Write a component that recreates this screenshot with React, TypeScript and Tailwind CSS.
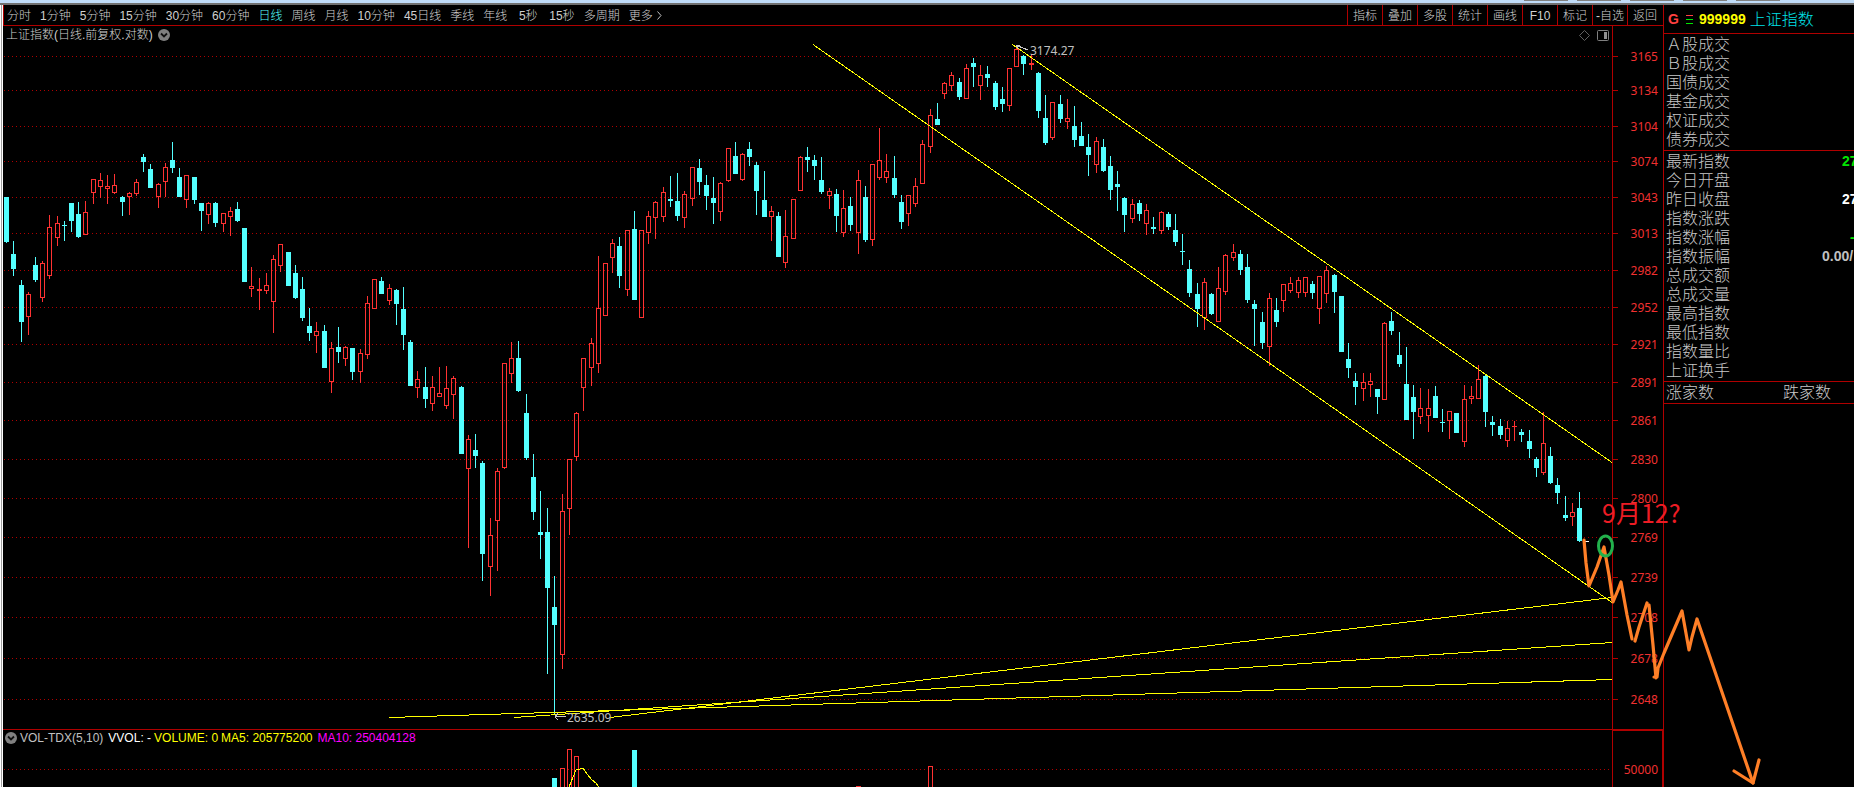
import React from "react";

type Candle = { up: boolean; x: number; high: number; top: number; bottom: number; low: number };

// direction + x, high, body top, body bottom, low
const CANDLE_DATA = `
d6 197 197 242 243;d13 241 254 269 276;d21 280 285 322 342;u28 292 294 317 335;d35 257 265 280 282;
u42 261 263 298 302;u49 215 227 276 279;u57 216 223 238 246;d64 221 225 226 241;d71 203 203 221 232;
d78 202 214 237 238;u85 201 212 235 235;u93 179 179 193 204;u100 173 180 187 198;u107 175 186 189 204;
u114 174 185 193 194;d122 196 197 202 216;u129 192 193 197 215;u136 179 182 194 196;d143 154 157 162 172;
d150 164 169 188 188;u158 183 184 197 208;u165 163 167 182 197;d172 142 160 168 173;d179 168 177 197 197;
u186 175 175 200 208;d194 177 177 200 204;d201 203 203 211 231;u208 202 203 215 224;d215 202 203 223 227;
u223 213 213 224 232;u230 207 211 217 236;d237 202 209 221 222;d244 228 228 282 282;u251 267 286 289 297;
u259 278 289 291 310;u266 273 285 291 294;u273 255 259 302 333;u280 244 244 266 272;d288 252 252 286 286;
d295 265 273 298 299;d302 277 289 318 321;d309 308 326 333 341;u316 322 331 336 353;d324 325 331 368 368;
u331 342 348 382 393;d338 327 347 352 363;u345 346 347 359 366;d352 348 348 372 380;u360 349 353 372 383;
u367 296 303 355 359;u374 279 279 309 309;d381 277 281 294 294;u389 284 288 301 305;d396 289 290 304 325;
d403 287 309 335 350;d410 340 342 386 386;u417 371 379 388 398;d425 367 387 399 408;u432 376 387 404 411;
u439 367 393 397 397;u446 366 388 406 409;u453 376 378 395 419;d461 386 387 454 454;u468 435 439 469 548;
d475 434 450 456 468;d482 461 463 554 581;u490 518 535 567 596;u497 468 471 521 571;u504 363 363 468 469;
u511 342 358 374 383;d518 341 358 391 392;d526 394 413 458 460;d533 454 477 512 520;d540 491 532 535 559;
d547 508 532 588 674;d554 576 607 625 715;u562 494 511 655 669;u569 459 459 509 535;u576 412 413 457 461;
u583 358 358 388 411;u591 338 343 368 386;u598 256 308 364 373;u605 263 263 316 316;u612 239 243 258 273;
d619 237 246 276 288;u627 230 230 290 296;d634 211 229 300 300;u641 230 230 318 318;u648 211 216 233 244;
u655 201 202 218 239;u663 187 192 217 222;d670 176 199 201 207;d677 173 201 216 221;u684 191 194 218 228;
u692 167 167 199 206;d699 159 168 182 195;d706 175 185 196 210;d713 177 198 203 224;u720 182 183 212 221;
u728 148 148 181 182;d735 142 156 174 174;u742 153 154 180 181;d749 142 149 157 166;d756 162 165 191 215;
d764 171 200 217 217;u771 206 211 217 241;d778 212 216 257 257;u785 210 236 263 268;u793 199 199 239 239;
u800 156 157 191 191;d807 147 157 160 172;d814 155 160 166 180;d821 157 180 192 194;u829 188 191 196 209;
d836 189 194 216 232;u843 190 208 233 237;d850 197 206 225 231;u858 170 180 233 254;d865 186 197 240 242;
u872 164 164 240 246;u879 128 160 178 180;u886 154 171 178 183;d894 156 178 195 198;d901 195 202 222 229;
u908 195 195 214 226;u915 178 186 204 207;u922 140 144 184 184;u930 109 115 147 153;d937 103 119 125 125;
u944 82 83 94 99;u951 72 75 86 91;d959 78 82 97 100;u966 64 68 99 99;d973 58 63 67 87;
u980 65 75 86 100;d987 66 74 78 87;d995 81 83 107 110;d1002 87 99 104 112;u1009 68 68 106 111;
u1016 46 49 67 67;d1023 55 56 64 75;u1031 54 63 65 70;d1038 72 73 111 118;d1045 95 118 143 145;
u1052 102 102 138 140;d1060 95 104 119 123;u1067 99 118 122 129;d1074 106 126 140 147;d1081 122 136 146 146;
d1088 134 147 155 176;u1096 137 141 165 173;d1103 139 147 171 172;d1110 156 166 190 200;d1117 171 184 187 211;
d1124 197 198 215 232;u1132 199 204 219 223;d1139 200 203 214 221;u1146 204 210 224 235;d1153 217 227 229 234;
u1161 211 212 231 234;d1168 212 214 227 230;d1175 214 230 242 246;d1182 234 251 252 265;d1189 260 269 293 297;
d1197 283 294 309 327;u1204 278 282 318 330;d1211 293 294 314 315;u1218 267 288 322 322;u1225 254 255 292 295;
u1233 244 252 258 261;d1240 250 254 270 275;d1247 254 267 300 303;d1254 300 304 309 346;d1262 312 322 343 349;
u1269 293 298 347 366;d1276 298 310 322 327;u1283 284 284 301 312;u1290 277 283 291 293;u1298 277 280 293 298;
u1305 277 277 293 297;d1312 281 284 293 299;u1319 276 276 309 324;u1326 266 270 294 303;d1334 274 275 292 313;
d1341 296 296 352 352;d1348 343 359 368 378;d1355 373 381 387 405;u1363 373 382 389 401;u1370 373 381 385 397;
d1377 389 389 397 414;u1384 322 323 400 400;d1391 312 321 331 335;d1399 332 355 364 367;d1406 347 384 420 420;
d1413 385 397 412 439;u1420 388 408 417 424;u1428 389 408 416 432;d1435 386 396 418 418;d1442 409 422 423 432;
u1449 411 411 421 439;d1456 413 413 433 433;u1464 385 399 442 447;u1471 386 396 399 404;u1478 365 379 399 399;
d1485 375 376 412 427;d1492 416 422 425 436;d1500 419 426 435 439;u1507 421 428 441 447;u1514 421 426 427 441;
d1521 429 432 435 442;d1529 430 441 449 458;d1536 457 459 468 477;u1543 412 443 473 475;d1550 447 456 483 484;
d1557 478 485 493 504;d1565 496 515 518 521;u1572 503 512 517 526;d1579 492 508 541 542`;

const CANDLES: Candle[] = CANDLE_DATA.trim()
  .split(";")
  .map((entry) => {
    const s = entry.trim();
    const [x, high, top, bottom, low] = s.slice(1).split(" ").map(Number);
    return { up: s[0] === "u", x, high, top, bottom, low };
  });

const PRICE_TICKS: [number, number][] = [
  [3165, 56], [3134, 90], [3104, 126], [3074, 161], [3043, 197], [3013, 233],
  [2982, 270], [2952, 307], [2921, 344], [2891, 382], [2861, 420], [2830, 459],
  [2800, 498], [2769, 537], [2739, 577], [2708, 617], [2678, 658], [2648, 699],
];

const PERIODS = [
  "分时", "1分钟", "5分钟", "15分钟", "30分钟", "60分钟", "日线", "周线", "月线",
  "10分钟", "45日线", "季线", "年线", "5秒", "15秒", "多周期",
];

const TOOLS = ["指标", "叠加", "多股", "统计", "画线", "F10", "标记", "-自选", "返回"];

const TURNOVER = ["Ａ股成交", "Ｂ股成交", "国债成交", "基金成交", "权证成交", "债券成交"];

const QUOTES: { label: string; value?: string; style?: string }[] = [
  { label: "最新指数", value: "27", style: "w-3 text-[#00e600]" },
  { label: "今日开盘" },
  { label: "昨日收盘", value: "27", style: "w-3 text-white" },
  { label: "指数涨跌" },
  { label: "指数涨幅", value: "-", style: "w-1 text-[#00e600]" },
  { label: "指数振幅", value: "0.00/", style: "w-8 text-[#c0c0c0]" },
  { label: "总成交额" },
  { label: "总成交量" },
  { label: "最高指数" },
  { label: "最低指数" },
  { label: "指数量比" },
  { label: "上证换手" },
];

const UP = "#ff3232";
const DOWN = "#54ffff";
const GRID = "#b00000";

function CandleShape({ c }: { c: Candle }) {
  const h = c.bottom - c.top;
  if (!c.up) {
    return (
      <g fill={DOWN}>
        <rect x={c.x} y={c.high} width={1} height={c.low - c.high} />
        <rect x={c.x - 2} y={c.top} width={5} height={h} />
      </g>
    );
  }
  return (
    <g fill={UP}>
      {c.top > c.high && <rect x={c.x} y={c.high} width={1} height={c.top - c.high} />}
      {c.low > c.bottom && <rect x={c.x} y={c.bottom} width={1} height={c.low - c.bottom} />}
      {h <= 2 ? (
        <rect x={c.x - 2} y={c.top} width={5} height={h} />
      ) : (
        <rect x={c.x - 1.5} y={c.top + 0.5} width={4} height={h - 1} fill="none" stroke={UP} />
      )}
    </g>
  );
}

function GridLine({ y }: { y: number }) {
  return <line x1={4} x2={1612} y1={y + 0.5} y2={y + 0.5} stroke={GRID} strokeDasharray="1 3" />;
}

function PricePlot() {
  return (
    <svg
      viewBox="3 44 1609 685"
      preserveAspectRatio="xMaxYMin meet"
      className="block h-[685px] w-full"
      role="img"
      aria-label="上证指数日线"
    >
      <g shapeRendering="crispEdges">
        {PRICE_TICKS.map(([p, y]) => (
          <GridLine key={p} y={y} />
        ))}
        {CANDLES.map((c) => (
          <CandleShape key={c.x} c={c} />
        ))}
        <g stroke="#ffff00" strokeWidth={1}>
          <line x1={813} y1={44.5} x2={1612} y2={602.5} />
          <line x1={1012.5} y1={44.5} x2={1612} y2={462.5} />
          <line x1={389} y1={717.5} x2={1612} y2={679.5} />
          <line x1={514} y1={717.5} x2={1612} y2={642.5} />
          <line x1={610} y1={717.5} x2={1612} y2={597.5} />
        </g>
        <rect x={1585} y={541} width={4} height={1} fill="#ffffff" />
        <g stroke="#c8c8c8" fill="none">
          <path d="M1016 45.5 L1022 47.5 L1028 50 M1016 45.5 H1020 M1016 45.5 L1019 49" />
          <path d="M555 716.5 H566 M555 716.5 L558 713.5 M555 716.5 L558 720" />
        </g>
      </g>
      <g className="font-['Noto_Sans',sans-serif] text-[12px]" fill="#c0c0c0">
        <text x={1030} y={55}>3174.27</text>
        <text x={567} y={722}>2635.09</text>
      </g>
    </svg>
  );
}

function VolumePlot() {
  return (
    <svg
      viewBox="3 746 1609 41"
      preserveAspectRatio="xMaxYMin meet"
      className="block h-[41px] w-full"
      shapeRendering="crispEdges"
      role="img"
      aria-label="成交量"
    >
      <GridLine y={769} />
      <rect x={552} y={778} width={5} height={12} fill={DOWN} />
      <rect x={632} y={750} width={5} height={40} fill={DOWN} />
      <g fill="none" stroke={UP}>
        <rect x={560.5} y={768.5} width={4} height={24} />
        <rect x={567.5} y={749.5} width={4} height={40} />
        <rect x={574.5} y={756.5} width={4} height={40} />
        <rect x={856.5} y={786.5} width={4} height={10} />
        <rect x={928.5} y={766.5} width={4} height={40} />
      </g>
      <polyline
        points="569,787 573,777 576,770 580,769 583,768 587,774 592,780 596,783 599,787"
        fill="none"
        stroke="#ffff00"
      />
    </svg>
  );
}

function PriceAxis() {
  return (
    <svg className="block h-[703px] w-full" viewBox="1613 26 50 703" preserveAspectRatio="xMinYMin meet">
      <g className="font-['Noto_Sans',sans-serif] text-[12px]" fill="#f03030">
        {PRICE_TICKS.map(([p, y]) => (
          <g key={p}>
            <rect x={1613} y={y} width={5} height={1} fill={GRID} />
            <text x={1658} y={y + 5} textAnchor="end">
              {p}
            </text>
          </g>
        ))}
      </g>
    </svg>
  );
}

function Annotations() {
  return (
    <svg
      viewBox="1612 480 242 307"
      className="pointer-events-none absolute left-[-1px] top-[454px] z-10 h-[307px] w-[242px] overflow-visible"
    >
      <g fill="none" stroke="#ff7f27" strokeWidth={3.2} strokeLinecap="round" strokeLinejoin="round">
        <path d="M1584 540 L1586 563 L1589 586 L1597 567 L1604 547 L1609 575 L1613 602 L1618 590 L1621 582 L1627 615 L1632 639" />
        <path d="M1635 641 L1639 627 L1647 603 M1649 605 L1653 645 L1656 678 M1654 677 H1657 L1658 668 L1664 653 L1682 611 L1689 650 L1692 637 L1697 619 L1753 783" />
        <path d="M1734 771 L1753 783 L1759 760" />
      </g>
      <ellipse cx={1605.5} cy={546} rx={7} ry={10} fill="none" stroke="#22b14c" strokeWidth={3} />
      <text x={1602} y={523} fill="#ed1c24" className="font-['Noto_Sans_CJK_SC',sans-serif] text-[25px]">
        9月12?
      </text>
    </svg>
  );
}

function ToggleIcon() {
  return (
    <svg viewBox="0 0 12 12" className="size-3 shrink-0" aria-hidden="true">
      <circle cx={6} cy={6} r={6} fill="#808080" />
      <path d="M3 4.5 L6 7.5 L9 4.5" fill="none" stroke="#101010" strokeWidth={1.8} />
    </svg>
  );
}

function Toolbar() {
  return (
    <nav className="flex h-[21px] items-stretch border-b border-l border-[#b00000] text-[12px] font-light">
      <div className="flex items-center gap-[9px] pl-[3px] pt-px">
        {PERIODS.map((p) => (
          <button
            key={p}
            type="button"
            className={`min-w-6 whitespace-nowrap ${p === "日线" ? "text-[#54ffff]" : "text-[#d0d0d0]"}`}
          >
            {p}
          </button>
        ))}
        <button type="button" className="flex items-center gap-1 whitespace-nowrap text-[#d0d0d0]">
          更多
          <svg viewBox="0 0 5 9" className="h-[9px] w-[5px]" fill="none" stroke="#c0c0c0" aria-hidden="true">
            <path d="M0.5 0.5 L4 4.5 L0.5 8.5" />
          </svg>
        </button>
      </div>
      <div className="ml-auto flex pr-px">
        {TOOLS.map((t) => (
          <button
            key={t}
            type="button"
            className="w-[35px] whitespace-nowrap border-l border-[#b00000] pt-px text-center text-[#d0d0d0]"
          >
            {t}
          </button>
        ))}
      </div>
    </nav>
  );
}

function ChartArea() {
  return (
    <div className="flex">
      <div className="min-w-0 flex-1">
        <div className="flex h-[18px] items-center gap-[5px] px-[3px] text-[12px] font-light text-[#d0d0d0]">
          <span>上证指数(日线.前复权.对数)</span>
          <ToggleIcon />
          <svg viewBox="0 0 11 11" className="ml-auto size-[11px]" fill="none" stroke="#606060" aria-hidden="true">
            <path d="M5.5 0.5 L10.5 5.5 L5.5 10.5 L0.5 5.5 Z" />
          </svg>
          <svg viewBox="0 0 12 11" className="ml-[2px] h-[11px] w-3" fill="none" stroke="#808080" aria-hidden="true">
            <rect x={0.5} y={0.5} width={11} height={10} rx={1} />
            <rect x={7} y={2} width={3} height={7} fill="#909090" stroke="none" />
          </svg>
        </div>
        <PricePlot />
        <div className="flex h-[17px] items-center gap-[3px] border-t border-[#b00000] pl-[2px] font-['Liberation_Sans',sans-serif] text-[12px]">
          <ToggleIcon />
          <span className="text-[#c0c0c0]">VOL-TDX(5,10)</span>
          <span className="pl-[2px] text-white">VVOL: -</span>
          <span className="text-[#ffff00]">VOLUME: 0</span>
          <span className="text-[#ffff00]">MA5: 205775200</span>
          <span className="pl-[2px] text-[#ff00ff]">MA10: 250404128</span>
        </div>
        <VolumePlot />
      </div>
      <div className="relative flex w-[51px] shrink-0 flex-col border-l border-[#b00000]">
        <PriceAxis />
        <div className="flex flex-1 items-center justify-end border-r border-t-2 border-[#b00000] pr-1 pt-[22px] font-['Noto_Sans',sans-serif] text-[12px] text-[#f03030]">
          50000
        </div>
        <Annotations />
      </div>
    </div>
  );
}

function QuotePanel() {
  return (
    <aside className="w-[191px] shrink-0 overflow-hidden border-l border-[#b00000] text-[16px] font-light leading-[19px] text-[#c8c8c8]">
      <header className="flex h-[29px] items-center whitespace-nowrap border-b border-[#b00000] pl-1">
        <span className="w-[18px] font-['Liberation_Sans',sans-serif] text-[14px] font-bold text-[#ff4040]">G</span>
        <svg viewBox="0 0 7 11" className="mr-[6px] h-[11px] w-[7px]" aria-hidden="true" shapeRendering="crispEdges">
          <rect x={0} y={1} width={7} height={1} fill="#ff4040" />
          <rect x={0} y={5} width={7} height={1} fill="#00e600" />
          <rect x={0} y={9} width={7} height={1} fill="#00e600" />
        </svg>
        <span className="mr-1 font-['Liberation_Sans',sans-serif] text-[14px] font-bold text-[#ffff00]">999999</span>
        <span className="text-[#00e0e8]">上证指数</span>
      </header>
      <ul className="border-b border-[#b00000] py-px pl-[2px]">
        {TURNOVER.map((t) => (
          <li key={t}>{t}</li>
        ))}
      </ul>
      <dl className="border-b border-[#b00000] py-px pl-[2px]">
        {QUOTES.map((q) => (
          <div key={q.label} className="flex h-[19px] items-center">
            <dt>{q.label}</dt>
            {q.value && (
              <dd
                className={`ml-auto overflow-hidden whitespace-nowrap font-['Liberation_Sans',sans-serif] text-[14px] font-bold ${q.style}`}
              >
                {q.value}
              </dd>
            )}
          </div>
        ))}
      </dl>
      <div className="flex justify-between border-b border-[#b00000] py-px pl-[2px] pr-[23px]">
        <span>涨家数</span>
        <span>跌家数</span>
      </div>
    </aside>
  );
}

export default function App() {
  return (
    <div className="overflow-hidden bg-white font-['Liberation_Sans','Noto_Sans_CJK_SC',sans-serif]">
      <div className="flex h-[5px] justify-end gap-[9px] border-b-2 border-[#707070] bg-[#c0dcf8] pr-[74px]">
        {[0, 1, 2, 3, 4].map((i) => (
          <span key={i} className="h-px w-11 bg-[#808080]" />
        ))}
      </div>
      <div className="pl-px">
        <div className="border-l border-[#a0a0a0] pl-px">
          <div className="flex bg-black">
            <div className="min-w-0 flex-1">
              <Toolbar />
              <ChartArea />
            </div>
            <QuotePanel />
          </div>
        </div>
      </div>
    </div>
  );
}
